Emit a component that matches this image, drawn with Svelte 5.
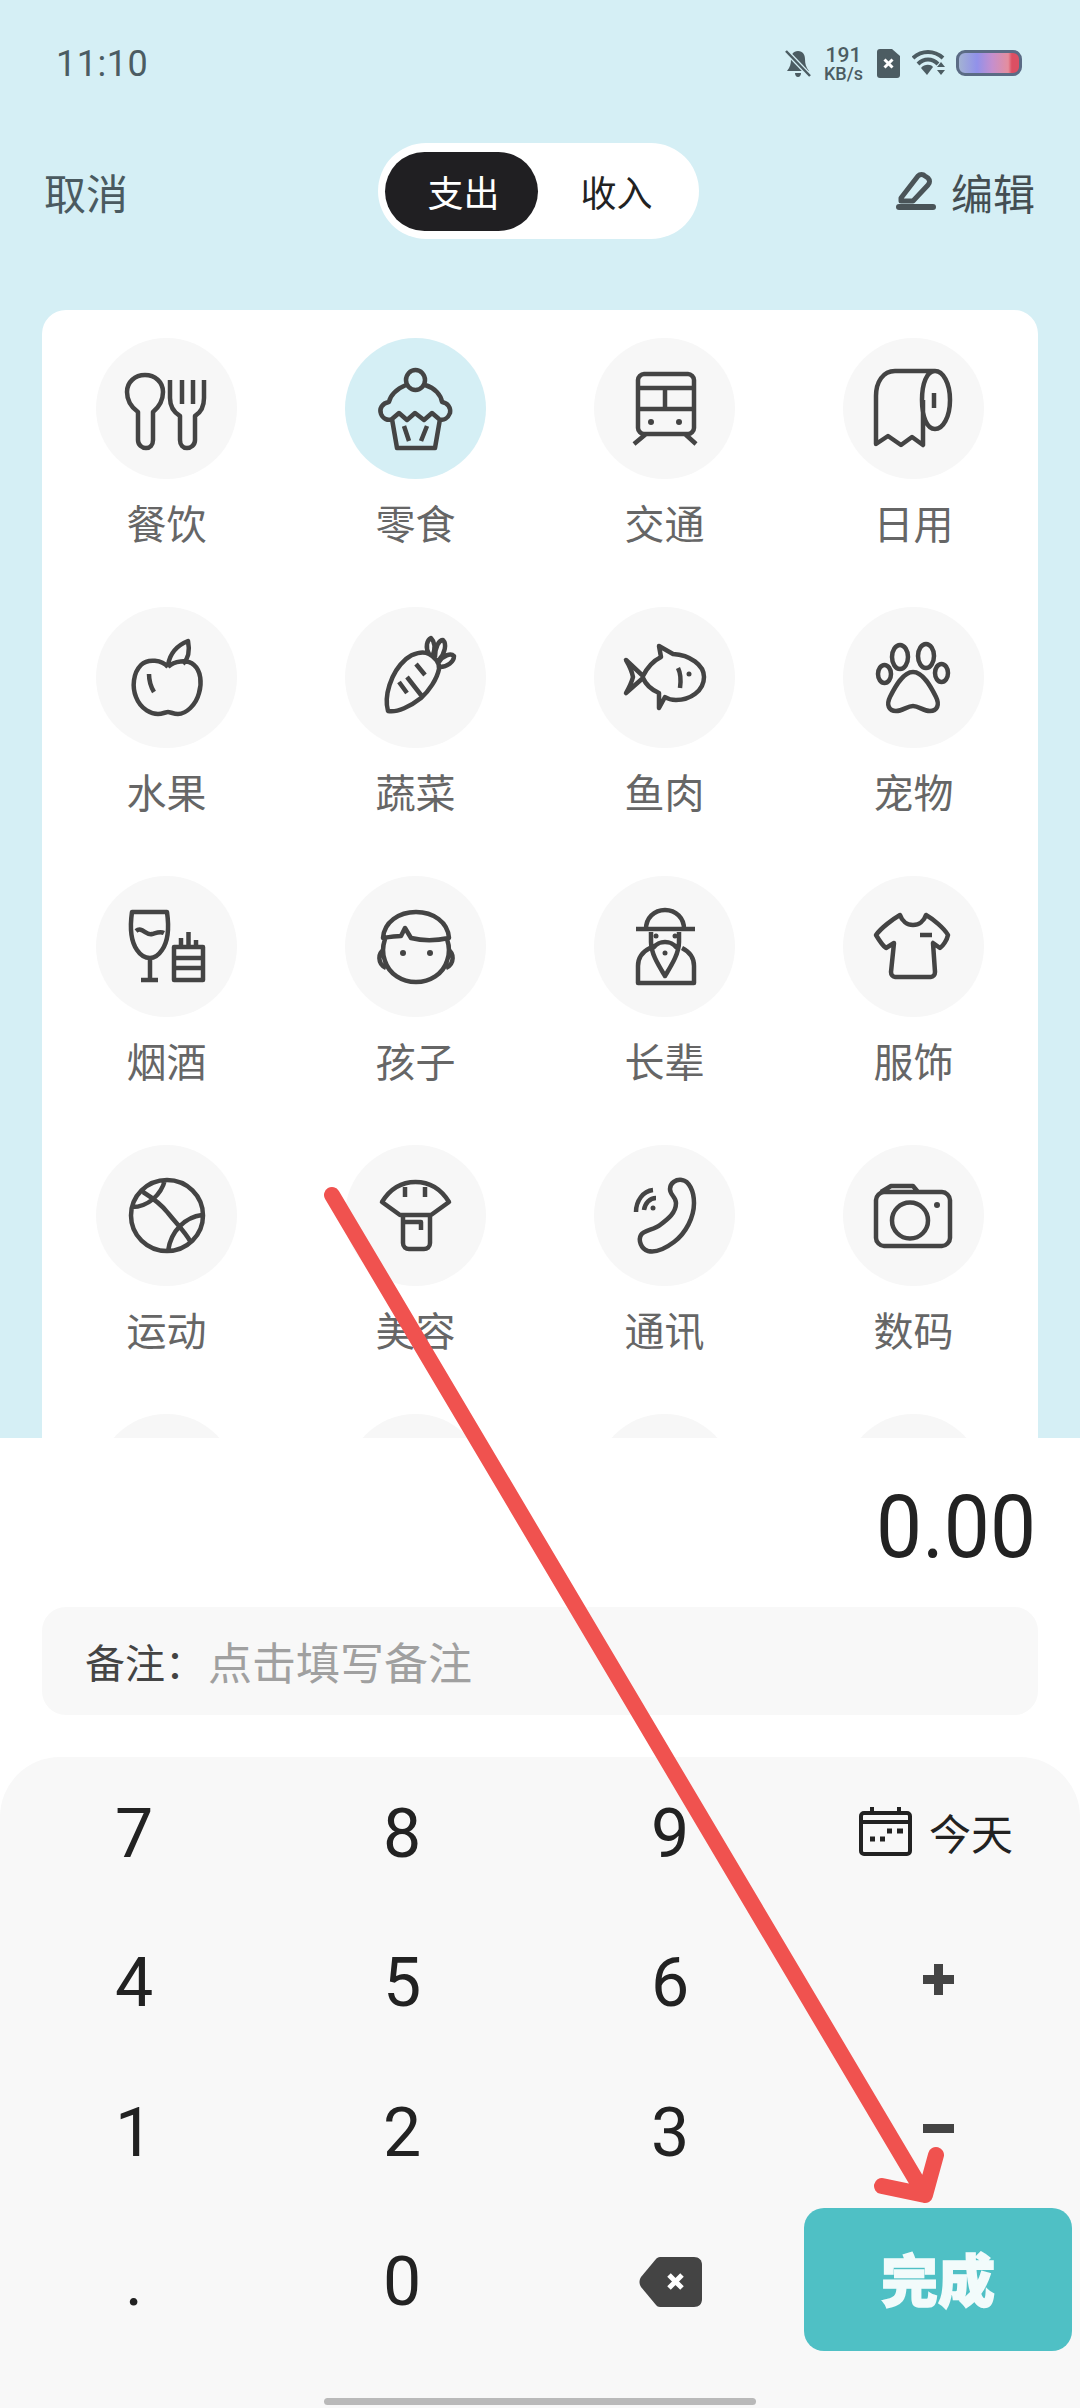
<script>
	// every icon is drawn in the 141x141 box of its circle
	const categories = [
		{ name: '餐饮', d: 'M42 74C35 69 31 62 31 54C31 44 39 37 49 37C59 37 67 44 67 54C67 62 63 69 57 74V102C57 107 54 110 50 110C46 110 42 107 42 102ZM74 42V60C74 70 79 75 84 78V102C84 107 87 110 91 110C95 110 99 107 99 102V78C104 75 108 70 108 60V42M86 42V66M97 42V66' },
		{ name: '零食', active: true, d: 'M61 42a9.500 10 0 1 0 19 0a9.500 10 0 1 0 -19 0M61 47C51 51 45 58 44 64C37 65 34 71 36 76C38 81 43 83 47 81L54 75L62 82L70 75L79 82L87 75L94 81C99 83 103 80 105 75C106 70 103 65 97 64C96 57 90 50 80 47M47 81L52 110H90L95 81M59 88L64 103M82 88L76 103' },
		{ name: '交通', d: 'M50 36H94C97 36 100 39 100 42V90C100 93 97 96 94 96H50C47 96 44 93 44 90V42C44 39 47 36 50 36ZM44 50H100M44 71H100M71 50V71M52 96L40 106M91 96L102 106', dots: [[57, 84, 3], [85, 84, 3]] },
		{ name: '日用', d: 'M92 33C100 33 107 45 107 62C107 79 100 91 92 91C84 91 79 79 79 62C79 45 84 33 92 33ZM92 33H52C40 33 33 44 33 58V106L45 98L58 107L69 99L80 107V62M91 55V70' },
		{ name: '水果', d: 'M72 60C66 53 52 51 45 58C37 66 36 80 40 90C45 103 56 107 62 107C66 107 70 105 72 105C74 105 78 107 82 107C90 107 100 98 103 86C106 76 105 64 98 58C91 52 78 54 72 60M72 58C74 46 82 38 92 34C94 44 92 52 87 57M53 67C53 74 55 80 58 85' },
		{ name: '蔬菜', d: 'M43 104C39 90 45 66 61 52C68 46 78 44 84 47C90 50 95 56 94 62C92 72 84 84 76 91C66 99 52 106 43 104ZM71 57L80 68M62 70L76 88M54 75L62 86M84 47C80 40 82 33 86 31C90 35 90 42 88 48M90 50C90 40 94 33 98 33C102 37 100 46 94 53M94 55C98 48 106 46 109 49C109 55 102 60 95 60' },
		{ name: '鱼肉', d: 'M32 53L49 69C53 61 59 54 67 50L65 39L79 47C96 48 110 58 110 70C110 84 96 93 82 93C78 93 74 92 71 90L65 101L65 86C58 83 52 78 49 71L32 86C36 79 38 74 39 70C38 65 35 58 32 53ZM84 61C87 67 87 74 86 81', dots: [[95, 67, 2.5]] },
		{ name: '宠物', d: 'M49 50a8 12 0 1 0 16 0a8 12 0 1 0 -16 0M75 49a8 12 0 1 0 16 0a8 12 0 1 0 -16 0M35 67a6.500 9 0 1 0 13 0a6.500 9 0 1 0 -13 0M92 66a6.500 9 0 1 0 13 0a6.500 9 0 1 0 -13 0M70 65C60 65 52 80 47 90C43 98 46 104 53 104C60 104 64 99 70 99C76 99 80 104 87 104C94 104 97 98 93 90C88 80 80 65 70 65Z' },
		{ name: '烟酒', d: 'M36 36H71C73 50 73 64 66 74C62 80 58 82 54 82C50 82 45 80 41 74C34 64 34 50 36 36ZM54 82V104M45 104H62M40 55C46 50 50 60 56 58C60 57 64 55 68 57M78 71H107V104H78ZM78 82H107M78 92H107M85 71V62M92.500 71V56M100 71V64' },
		{ name: '孩子', d: 'M38 62C39 46 54 36 71 36C88 36 103 46 104 62C90 65 78 65 66 62L60 52L56 60C50 60 44 61 38 62ZM40 63C37 72 38 80 40 85C44 98 57 106 71 106C85 106 98 98 102 85C104 80 105 72 102 63M39 74C33 76 32 88 41 92M103 74C109 76 110 88 101 92', dots: [[58, 77, 3], [85, 77, 3]] },
		{ name: '长辈', d: 'M52 53C52 42 60 34 71 34C82 34 90 42 90 53M42 53H101M57 56V66C57 78 65 90 71 100C77 90 85 78 85 66V56M59 72C64 66 68 66 71 66C74 66 78 66 83 72M56 72C48 76 44 82 44 90V107H100V90C100 82 96 76 88 72', dots: [[62, 60, 2.5], [81, 60, 2.5], [71, 77, 2.5]] },
		{ name: '服饰', d: 'M57 39C59 45 64 49 70 49C76 49 81 45 83 39C90 43 101 52 105 59C104 64 100 70 97 72L90 67L92 96C92 99 90 101 88 101H52C50 101 48 99 48 96L51 67L43 72C40 70 36 64 33 59C38 52 50 43 57 39ZM77 59H89' },
		{ name: '运动', d: 'M107 70.500a36 35.500 0 1 0 -72 0a36 35.500 0 1 0 72 0M47 47C55 52 66 60 72 68C80 78 90 88 94 96M69 35C65 50 52 62 36 62M106 70C90 72 75 85 72 106' },
		{ name: '美容', d: 'M70.500 37C57 37 45 44 37 57L55 70H86L104 57C96 44 84 37 70.500 37ZM60 42V52M80 42V52M58 70V98C58 102 61 104 64 104H79C82 104 85 102 85 98V70M58 77H76V85' },
		{ name: '通讯', d: 'M76 44C76 38 82 34 88 35C95 36 100 46 100 58C100 72 92 88 80 97C72 103 62 108 54 106C47 104 44 95 47 90C50 85 60 85 66 80C74 74 82 68 82 58C82 52 76 50 76 44ZM62 53C56 53 51 58 50 65M59 45C49 46 42 56 42 67', dots: [[59, 63, 2.5]] },
		{ name: '数码', d: 'M41 47H99C103 47 107 51 107 55V93C107 97 103 101 99 101H41C37 101 33 97 33 93V55C33 51 37 47 41 47ZM38 47L48 41H70L75 47M85 75.500a18 18 0 1 0 -36 0a18 18 0 1 0 36 0', dots: [[94, 60, 3]] },
		{ name: '', d: '' },
		{ name: '', d: '' },
		{ name: '', d: '' },
		{ name: '', d: '' }
	];

	const keys = ['7', '8', '9', null, '4', '5', '6', '+', '1', '2', '3', '−', '.', '0'];
</script>

<main class="page">
	<div class="top">
		<div class="status">
			<span class="time">11:10</span>
			<div class="status-icons">
				<svg class="bell" viewBox="0 0 26 27">
					<path d="M13 1C8 1 6 5 6 9C6 14 5 17 2 21H24C21 17 20 14 20 9C20 5 18 1 13 1ZM10 23C10 25 11 27 13 27C15 27 16 25 16 23Z" fill="#4c5c62" />
					<path d="M1 1L25 26" stroke="#d5eff5" stroke-width="5" />
					<path d="M1 1L25 26" stroke="#4c5c62" stroke-width="2.500" />
				</svg>
				<div class="speed"><span>191</span><span class="unit">KB/s</span></div>
				<svg class="sim" viewBox="0 0 23 29">
					<path d="M3 0H15L23 7V26C23 28 22 29 20 29H3C1 29 0 28 0 26V3C0 1 1 0 3 0Z" fill="#4c5c62" />
					<path d="M7.500 10.500L15.500 18.500M15.500 10.500L7.500 18.500" stroke="#fff" stroke-width="3" />
				</svg>
				<svg class="wifi" viewBox="0 0 34 26">
					<path d="M1 8C10 0 22 0 31 8M6 14C12 8 20 8 26 14" fill="none" stroke="#4c5c62" stroke-width="4" />
					<path d="M9 18C12 14 19 14 21 17L15 25Z" fill="#4c5c62" />
					<path d="M25 17H33L29 12ZM25 20H33L29 25Z" fill="#4c5c62" />
				</svg>
				<div class="battery"></div>
			</div>
		</div>

		<header class="header">
			<span class="cancel">取消</span>
			<div class="toggle">
				<span class="tab on">支出</span>
				<span class="tab">收入</span>
			</div>
			<div class="edit">
				<svg class="pen" viewBox="0 0 40 38">
					<path d="M5 26L22 4C24 2 27 2 29 4L32 6C34 8 34 11 32 13L17 29H5Z" fill="none" stroke="#4a5458" stroke-width="5" stroke-linejoin="round" />
					<rect x="0" y="32" width="40" height="6" rx="3" fill="#4a5458" />
				</svg>
				<span>编辑</span>
			</div>
		</header>

		<section class="card">
			{#each categories as cat}
				<div class="cat">
					<div class="circle" class:active={cat.active}>
						{#if cat.d}
							<svg viewBox="0 0 141 141">
								<path d={cat.d} fill="none" stroke="#444" stroke-width="4.500" stroke-linejoin="round" />
								{#each cat.dots ?? [] as [cx, cy, r]}
									<circle {cx} {cy} {r} fill="#444" />
								{/each}
							</svg>
						{/if}
					</div>
					{#if cat.name}<span class="name">{cat.name}</span>{/if}
				</div>
			{/each}
		</section>
	</div>

	<section class="sheet">
		<div class="amount"><span>0.00</span></div>
		<div class="note">
			<span class="note-label">备注：</span>
			<span class="note-hint">点击填写备注</span>
		</div>

		<div class="keypad">
			<div class="keys">
				{#each keys as key}
					{#if key === null}
						<div class="key today">
							<svg class="calendar" viewBox="0 0 53 49">
								<rect x="2" y="6" width="49" height="41" rx="3" fill="none" stroke="#222" stroke-width="4" />
								<path d="M2 15H51M13 0V6M40 0V6" stroke="#222" stroke-width="4" />
								<path d="M11 32H16M21 32H26M28 24H33M38 24H44" stroke="#222" stroke-width="5" />
							</svg>
							<span>今天</span>
						</div>
					{:else if key === '+' || key === '−'}
						<div class="key op">
							<svg viewBox="0 0 31 31">
								<path d="M0 15.500H31" stroke="#444" stroke-width="9" />
								{#if key === '+'}<path d="M15.500 0V31" stroke="#444" stroke-width="9" />{/if}
							</svg>
						</div>
					{:else}
						<div class="key">{key}</div>
					{/if}
				{/each}
				<div class="key">
					<svg class="backspace" viewBox="0 0 63 50">
						<path d="M17 2C18 1 19 0 21 0H55C60 0 63 3 63 8V42C63 47 60 50 55 50H21C19 50 18 49 17 48L2 30C0 27 0 23 2 20Z" fill="#444" />
						<path d="M30 18L43 31M43 18L30 31" stroke="#fff" stroke-width="5" />
					</svg>
				</div>
				<button class="done"><span>完成</span></button>
			</div>
			<div class="home-bar"></div>
		</div>
	</section>

	<svg class="arrow" viewBox="0 0 1080 2408">
		<path d="M332 1195L925 2195M936 2155L925 2195L882 2186" fill="none" stroke="#f0524f" stroke-width="16" stroke-linecap="round" stroke-linejoin="round" />
	</svg>
</main>

<style>
	:global(body) {
		margin: 0;
		background: #fff;
	}

	.page {
		position: relative;
		display: flex;
		flex-direction: column;
		width: 1080px;
		height: 2408px;
		overflow: hidden;
		font-family: "Noto Sans CJK SC", "Noto Sans", sans-serif;
	}

	.top {
		display: flex;
		flex-direction: column;
		height: 1438px;
		flex: none;
		overflow: hidden;
		background: #d5eff5;
	}

	.status {
		display: flex;
		align-items: center;
		justify-content: space-between;
		height: 84px;
		flex: none;
		padding: 42px 58px 0 56px;
		box-sizing: border-box;
		color: #4c5c62;
	}

	.time {
		font-family: Roboto, sans-serif;
		font-size: 36px;
		letter-spacing: 0.5px;
		padding-top: 2px;
	}

	.status-icons {
		display: flex;
		align-items: center;
	}

	.bell {
		width: 26px;
		height: 27px;
	}

	.speed {
		display: flex;
		flex-direction: column;
		align-items: center;
		width: 37px;
		margin-left: 14px;
		font-family: Roboto, sans-serif;
		font-size: 21px;
		font-weight: 500;
		line-height: 20px;
	}

	.unit {
		font-size: 18px;
		white-space: nowrap;
		line-height: 17px;
	}

	.sim {
		width: 23px;
		height: 29px;
		margin-left: 15px;
	}

	.wifi {
		width: 34px;
		height: 26px;
		margin-left: 12px;
	}

	.battery {
		width: 60px;
		height: 20px;
		margin-left: 10px;
		border: 3px solid #5b6b85;
		border-radius: 9px;
		background: linear-gradient(90deg, #a3b2d3 0%, #9191ea 30%, #c48fce 55%, #e58e9e 82%, #dc4f63 88%, #dc4f63 100%);
	}

	.header {
		display: flex;
		align-items: center;
		justify-content: space-between;
		height: 96px;
		flex: none;
		margin-top: 59px;
		padding: 0 45px 0 44px;
	}

	.cancel {
		font-size: 42px;
		color: #4a5a60;
	}

	.toggle {
		display: flex;
		align-items: center;
		box-sizing: border-box;
		width: 321px;
		height: 96px;
		padding: 0 7px;
		margin-left: 52px;
		border-radius: 48px;
		background: #fff;
	}

	.tab {
		display: flex;
		align-items: center;
		justify-content: center;
		box-sizing: border-box;
		width: 153px;
		height: 79px;
		padding-left: 5px;
		border-radius: 40px;
		font-size: 36px;
		color: #222;
	}

	.tab.on {
		background: #201f22;
		color: #fff;
	}

	.edit {
		display: flex;
		align-items: center;
		gap: 15px;
		font-size: 42px;
		color: #444e52;
	}

	.pen {
		width: 40px;
		height: 38px;
	}

	.card {
		display: grid;
		grid-template-columns: repeat(4, 1fr);
		grid-auto-rows: 269px;
		flex: none;
		box-sizing: border-box;
		height: 1200px;
		margin: 71px 42px 0;
		padding-top: 28px;
		border-radius: 24px;
		background: #fff;
	}

	.cat {
		display: flex;
		flex-direction: column;
		align-items: center;
	}

	.circle {
		width: 141px;
		height: 141px;
		flex: none;
		border-radius: 50%;
		background: #f7f7f7;
	}

	.circle.active {
		background: #d5eff5;
	}

	.circle svg {
		display: block;
		width: 141px;
		height: 141px;
	}

	.name {
		margin-top: 20px;
		font-size: 40px;
		line-height: 47px;
		color: #666;
	}

	.sheet {
		display: flex;
		flex-direction: column;
		flex: 1;
		background: #fff;
	}

	.amount {
		height: 169px;
		padding: 32px 44px 0 0;
		box-sizing: border-box;
		font-family: Roboto, sans-serif;
		font-size: 82px;
		line-height: 114px;
		text-align: right;
		color: #222;
	}

	/* the reference digits are taller than Roboto's at this width */
	.amount span {
		display: inline-block;
		transform: scaleY(1.07);
	}

	.note {
		display: flex;
		align-items: center;
		height: 108px;
		margin: 0 42px;
		padding-left: 43px;
		border-radius: 24px;
		background: #f8f8f8;
	}

	.note-label {
		width: 123px;
		font-size: 40px;
		color: #444;
	}

	.note-hint {
		font-size: 44px;
		color: #a0a0a0;
	}

	.keypad {
		flex: 1;
		margin-top: 42px;
		border-radius: 60px 60px 0 0;
		background: #f8f8f8;
	}

	.keys {
		display: grid;
		grid-template-columns: repeat(4, 268px);
		grid-auto-rows: 149.5px;
		padding-top: 2px;
	}

	.key {
		display: flex;
		align-items: center;
		justify-content: center;
		font-family: Roboto, sans-serif;
		font-size: 68px;
		color: #222;
	}

	.today {
		gap: 17px;
		padding-bottom: 4px;
		box-sizing: border-box;
		font-family: "Noto Sans CJK SC", sans-serif;
		font-size: 42px;
	}

	.calendar {
		width: 53px;
		height: 49px;
		margin-left: -4px;
	}

	.op {
		padding-bottom: 8px;
		box-sizing: border-box;
	}

	.op svg {
		width: 31px;
		height: 31px;
	}

	.backspace {
		width: 63px;
		height: 50px;
	}

	.done {
		align-self: end;
		height: 143px;
		margin-bottom: 6px;
		padding: 0 0 6px;
		border: none;
		border-radius: 20px;
		background: #4fc0c5;
		font-family: "Noto Sans CJK SC", sans-serif;
		font-size: 57px;
		font-weight: 900;
		-webkit-text-stroke: 1.5px #f2fbfb;
		color: #f2fbfb;
	}

	.home-bar {
		width: 432px;
		height: 7px;
		margin: 41px auto 0;
		border-radius: 4px;
		background: #b9b9b9;
	}

	.arrow {
		position: absolute;
		top: 0;
		left: 0;
		width: 1080px;
		height: 2408px;
		pointer-events: none;
	}
</style>
